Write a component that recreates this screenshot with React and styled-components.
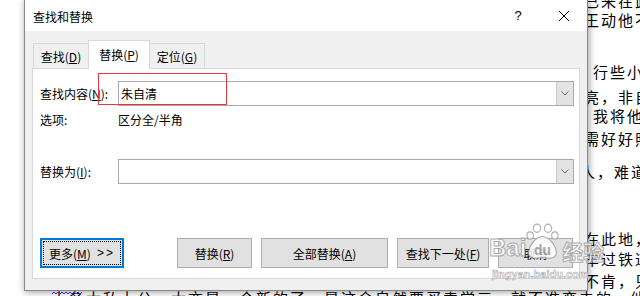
import React from 'react';
import styled, { createGlobalStyle } from 'styled-components';

const GlobalStyle = createGlobalStyle`
  html, body { margin: 0; padding: 0; background: #fff; }
  body {
    width: 640px; height: 296px; overflow: hidden;
    font-family: "Noto Sans CJK SC", "Noto Sans", sans-serif;
  }
`;

const Page = styled.div`
  position: relative;
  width: 640px;
  height: 296px;
  overflow: hidden;
  background: #fff;
`;

const Doc = styled.div`
  display: flex;
  flex-direction: column;
  margin-top: -9px;
  font-family: "Noto Sans CJK SC", sans-serif;
  font-size: 15px;
  letter-spacing: 2px;
  color: #000;
`;

const DocLine = styled.div`
  height: 19px;
  line-height: 19px;
  white-space: nowrap;
  padding-left: ${p => p.$indent}px;
  margin-top: ${p => p.$gap || 0}px;
`;

const Squiggle = styled.svg`
  position: absolute;
  left: 52px;
  top: 291px;
`;

const Dialog = styled.div`
  position: absolute;
  left: 24px;
  top: -1px;
  width: 564px;
  height: 292px;
  box-sizing: border-box;
  border: 1px solid #8a8a8a;
  background: #f0f0f0;
  box-shadow: 1px 1px 7px rgba(0, 0, 0, 0.4);
  display: flex;
  flex-direction: column;
  font-family: "Noto Sans CJK SC", sans-serif;
  font-size: 12px;
  color: #000;
`;

const TitleBar = styled.div`
  height: 31px;
  background: #fff;
  display: flex;
  align-items: center;
  padding-left: 8px;
`;

const Title = styled.div`
  flex: 1;
  font-size: 12px;
  padding-top: 1px;
`;

const CaptionButton = styled.div`
  width: 46px;
  height: 31px;
  display: flex;
  align-items: center;
  justify-content: center;
  font-family: "Liberation Sans", sans-serif;
  font-size: 13px;
`;

const Body = styled.div`
  flex: 1;
  display: flex;
  flex-direction: column;
  padding: 9px 7px 11px 7px;
`;

const TabStrip = styled.div`
  display: flex;
  align-items: flex-end;
  padding-left: 1px;
  margin-bottom: -1px;
  position: relative;
  z-index: 1;
`;

const Tab = styled.div`
  box-sizing: border-box;
  width: ${p => p.$w}px;
  height: ${p => (p.$active ? 29 : 26)}px;
  margin-left: ${p => (p.$first ? 0 : -1)}px;
  border: 1px solid #d9d9d9;
  border-bottom: ${p => (p.$active ? 'none' : '1px solid #d9d9d9')};
  background: ${p => (p.$active ? '#fff' : '#f0f0f0')};
  display: flex;
  align-items: center;
  justify-content: center;
  padding-bottom: ${p => (p.$active ? 2 : 0)}px;
  z-index: ${p => (p.$active ? 2 : 1)};
`;

const Panel = styled.div`
  flex: 1;
  background: #fff;
  border: 1px solid #d9d9d9;
  display: flex;
  flex-direction: column;
  padding: 12px 5px 10px 7px;
`;

const FieldRow = styled.div`
  display: flex;
  align-items: center;
  height: ${p => p.$h || 25}px;
  margin-top: ${p => p.$mt || 0}px;
`;

const Label = styled.div`
  width: 78px;
  flex: none;
  white-space: nowrap;
`;

const Combo = styled.div`
  flex: 1;
  height: 25px;
  box-sizing: border-box;
  border: 1px solid #a9a9a9;
  background: #fff;
  display: flex;
  align-items: center;
`;

const ComboText = styled.div`
  flex: 1;
  padding-left: 2px;
  font-size: 12px;
`;

const DropButton = styled.div`
  width: 17px;
  align-self: stretch;
  box-sizing: border-box;
  border-left: 1px solid #c8c8c8;
  background: #e3e3e3;
  display: flex;
  align-items: center;
  justify-content: center;
`;

const ButtonRow = styled.div`
  margin-top: auto;
  display: flex;
  align-items: center;
  gap: 9px;
  padding-right: 1px;
`;

const Spacer = styled.div`
  flex: 1;
`;

const Button = styled.div`
  box-sizing: border-box;
  width: ${p => p.$w}px;
  height: 30px;
  background: #e1e1e1;
  border: ${p => (p.$default ? '2px solid #0078d7' : '1px solid #adadad')};
  display: flex;
  align-items: center;
  justify-content: center;
  white-space: nowrap;
  padding: ${p => (p.$default ? '1px' : '0')};
`;

const FocusRect = styled.div`
  flex: 1;
  align-self: stretch;
  border: 1px dotted #000;
  display: flex;
  align-items: center;
  justify-content: center;
`;

const Arrows = styled.span`
  font-family: "Liberation Sans", sans-serif;
  margin-left: 6px;
  letter-spacing: 2px;
`;

const Highlight = styled.div`
  position: absolute;
  left: 98px;
  top: 73px;
  width: 129px;
  height: 32px;
  box-sizing: border-box;
  border: 1px solid #e8383d;
  pointer-events: none;
`;

const Watermark = styled.div`
  position: absolute;
  left: 489px;
  top: 222px;
  display: flex;
  flex-direction: column;
  align-items: flex-start;
  opacity: 0.85;
  pointer-events: none;
`;

const MarkRow = styled.div`
  display: flex;
  align-items: flex-end;
`;

const MarkText = styled.span`
  font-family: ${p => (p.$cjk ? '"Noto Sans CJK SC", sans-serif' : '"Liberation Sans", sans-serif')};
  font-weight: bold;
  font-size: ${p => p.$size}px;
  line-height: 1;
  color: #fff;
  -webkit-text-stroke: 1px #a0a0a0;
  margin-left: ${p => p.$ml || 0}px;
  margin-bottom: ${p => p.$mb || 0}px;
`;

const MarkUrl = styled.span`
  font-family: "Liberation Sans", sans-serif;
  font-weight: bold;
  font-size: 11px;
  color: #fff;
  -webkit-text-stroke: 0.6px #a0a0a0;
  margin-left: 3px;
  margin-top: 6px;
`;

const Chevron = () => (
  <svg width="8" height="5" viewBox="0 0 8 5">
    <path d="M0.5 0.5 L4 4 L7.5 0.5" fill="none" stroke="#6a6a6a" strokeWidth="1" />
  </svg>
);

const Paw = () => (
  <svg width="33" height="40" viewBox="0 0 36 40">
    <g fill="#fff" stroke="#a0a0a0" strokeWidth="1.2">
      <ellipse cx="12" cy="5" rx="4" ry="4.5" />
      <ellipse cx="24" cy="5" rx="4" ry="4.5" />
      <ellipse cx="4.5" cy="13" rx="3.5" ry="4" />
      <ellipse cx="31.5" cy="13" rx="3.5" ry="4" />
      <path d="M18 14 C26 14 34 26 33 33 C32 39 24 38 18 37 C12 38 4 39 3 33 C2 26 10 14 18 14 Z" />
    </g>
    <text x="18" y="34" textAnchor="middle" fontFamily="Liberation Sans, sans-serif" fontWeight="bold" fontSize="15" fill="#a0a0a0">du</text>
  </svg>
);

export default function App() {
  return (
    <Page>
      <GlobalStyle />
      <Doc>
        <DocLine $indent={584}>已来在此地</DocLine>
        <DocLine $indent={584}>王动他不</DocLine>
        <DocLine $indent={593} $gap={33}>行些小事</DocLine>
        <DocLine $indent={584} $gap={6}>亮，非自</DocLine>
        <DocLine $indent={593}>我将他</DocLine>
        <DocLine $indent={584} $gap={4}>需好好照</DocLine>
        <DocLine $indent={580} $gap={14}>人，难道</DocLine>
        <DocLine $indent={584} $gap={48}>在此地，</DocLine>
        <DocLine $indent={584} $gap={1}>车过铁道</DocLine>
        <DocLine $indent={584} $gap={3}>不肯，只</DocLine>
        <DocLine $indent={52} $gap={-2}>上各大私上公，大亦是一个新的了，是这会自然要买卖学三，就不准变去的，他不肯，只</DocLine>
      </Doc>
      <Squiggle width="30" height="4" viewBox="0 0 30 4">
        <path d="M0 3 L2 1 L4 3 L6 1 L8 3 L10 1 L12 3 L14 1 L16 3 L18 1 L20 3 L22 1 L24 3 L26 1 L28 3 L30 1" fill="none" stroke="#3a3aff" strokeWidth="1" />
      </Squiggle>

      <Dialog>
        <TitleBar>
          <Title>查找和替换</Title>
          <CaptionButton>?</CaptionButton>
          <CaptionButton>
            <svg width="10" height="10" viewBox="0 0 10 10">
              <path d="M0 0 L10 10 M10 0 L0 10" stroke="#000" strokeWidth="1" />
            </svg>
          </CaptionButton>
        </TitleBar>
        <Body>
          <TabStrip>
            <Tab $w={56} $first>查找(<u>D</u>)</Tab>
            <Tab $w={62} $active>替换(<u>P</u>)</Tab>
            <Tab $w={56}>定位(<u>G</u>)</Tab>
          </TabStrip>
          <Panel>
            <FieldRow>
              <Label>查找内容(<u>N</u>):</Label>
              <Combo>
                <ComboText>朱自清</ComboText>
                <DropButton><Chevron /></DropButton>
              </Combo>
            </FieldRow>
            <FieldRow $h={18} $mt={4}>
              <Label>选项:</Label>
              <div>区分全/半角</div>
            </FieldRow>
            <FieldRow $mt={31}>
              <Label>替换为(<u>I</u>):</Label>
              <Combo>
                <ComboText />
                <DropButton><Chevron /></DropButton>
              </Combo>
            </FieldRow>
            <ButtonRow>
              <Button $w={84} $default>
                <FocusRect>更多(<u>M</u>)<Arrows>&gt;&gt;</Arrows></FocusRect>
              </Button>
              <Spacer />
              <Button $w={75}>替换(<u>R</u>)</Button>
              <Button $w={127}>全部替换(<u>A</u>)</Button>
              <Button $w={92}>查找下一处(<u>F</u>)</Button>
              <Button $w={75}>取消</Button>
            </ButtonRow>
          </Panel>
        </Body>
      </Dialog>

      <Highlight />

      <Watermark>
        <MarkRow>
          <MarkText $size={24} $mb={2}>Bai</MarkText>
          <Paw />
          <MarkText $size={21} $cjk $ml={3}>经验</MarkText>
        </MarkRow>
        <MarkUrl>jingyan.baidu.com</MarkUrl>
      </Watermark>
    </Page>
  );
}
